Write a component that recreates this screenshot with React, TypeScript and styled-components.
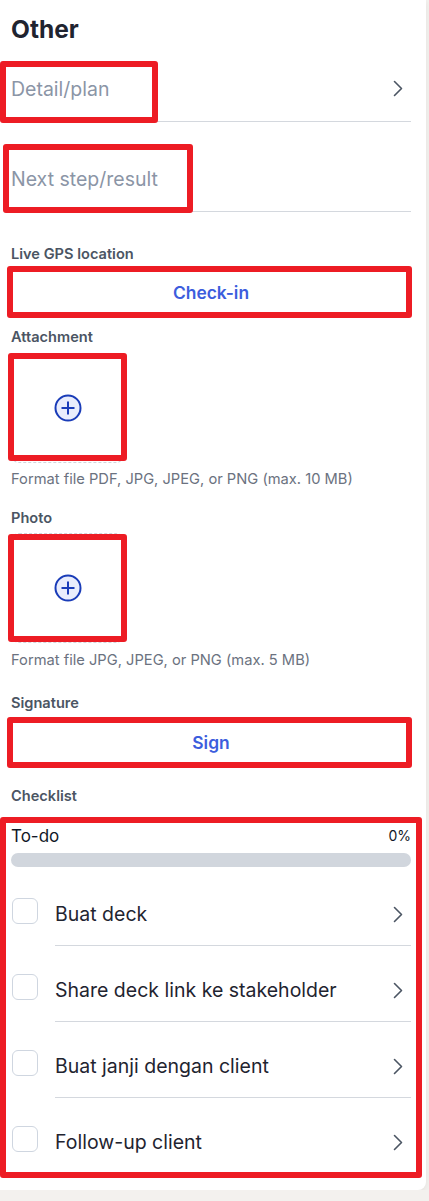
import { createGlobalStyle, styled } from "styled-components";

const GlobalStyle = createGlobalStyle`
    * { box-sizing: border-box; }
    body {
        margin: 0;
        background-color: #f3f1ee;
        font-family: Inter, "Noto Sans", "Liberation Sans", sans-serif;
    }
`;

const checklist = [
    "Buat deck",
    "Share deck link ke stakeholder",
    "Buat janji dengan client",
    "Follow-up client",
];

function Chevron() {
    return (
        <svg width="10" height="17" viewBox="0 0 10 17" fill="none">
            <polyline points="1.5,1.5 8.5,8.5 1.5,15.5" stroke="#4b5563" strokeWidth="1.6" strokeLinecap="round" strokeLinejoin="round" />
        </svg>
    );
}

function PlusCircle() {
    return (
        <svg width="28" height="28" viewBox="0 0 28 28" fill="none">
            <circle cx="14" cy="14" r="12.5" fill="#e9edfc" stroke="#1a3cb8" strokeWidth="2" />
            <line x1="7.5" y1="14" x2="20.5" y2="14" stroke="#1a3cb8" strokeWidth="2" />
            <line x1="14" y1="7.5" x2="14" y2="20.5" stroke="#1a3cb8" strokeWidth="2" />
        </svg>
    );
}

export default function App() {
    return (
        <>
            <GlobalStyle />
            <Card>
                <Heading>Other</Heading>

                <Marked $mt={18}>
                    <Field>
                        <Placeholder>Detail/plan</Placeholder>
                        <Chevron />
                    </Field>
                    <Outline $top={0} $left={-11} $width={158} $height={62} />
                </Marked>

                <Marked $mt={29}>
                    <Field>
                        <Placeholder>Next step/result</Placeholder>
                    </Field>
                    <Outline $top={-7} $left={-8} $width={190} $height={69} />
                </Marked>

                <Label $mt={32}>Live GPS location</Label>
                <Marked $mt={4}>
                    <ActionButton>Check-in</ActionButton>
                    <Outline $top={-2} $left={-4} $right={-1} $bottom={-2} />
                </Marked>

                <Label $mt={11}>Attachment</Label>
                <Marked $mt={6} $inline>
                    <UploadBox><PlusCircle /></UploadBox>
                    <Outline $top={0} $left={-3} $width={119} $height={108} />
                </Marked>
                <Helper $mt={6}>Format file PDF, JPG, JPEG, or PNG (max. 10 MB)</Helper>

                <Label $mt={19}>Photo</Label>
                <Marked $mt={5} $inline>
                    <UploadBox><PlusCircle /></UploadBox>
                    <Outline $top={1} $left={-3} $width={119} $height={108} />
                </Marked>
                <Helper $mt={7}>Format file JPG, JPEG, or PNG (max. 5 MB)</Helper>

                <Label $mt={23}>Signature</Label>
                <Marked $mt={5}>
                    <ActionButton>Sign</ActionButton>
                    <Outline $top={-1} $left={-4} $right={-1} $bottom={-2} />
                </Marked>

                <Label $mt={20}>Checklist</Label>
                <Marked $mt={20}>
                    <ProgressHead>
                        <span className="title">To-do</span>
                        <span className="percent">0%</span>
                    </ProgressHead>
                    <ProgressTrack><ProgressFill style={{ width: "0%" }} /></ProgressTrack>
                    <TaskList>
                        {checklist.map((task) => (
                            <TaskRow key={task}>
                                <Checkbox />
                                <TaskBody>
                                    <span>{task}</span>
                                    <Chevron />
                                </TaskBody>
                            </TaskRow>
                        ))}
                    </TaskList>
                    <Outline $top={-9} $left={-11} $right={-11} $bottom={-5} />
                </Marked>
            </Card>
        </>
    );
}

const Card = styled.div`
    width: 426px;
    background-color: #ffffff;
    padding: 15px 15px 17px 11px;
    border-radius: 0 0 8px 0;
    box-shadow: 0 2px 6px rgba(0, 0, 0, 0.07);
    display: flex;
    flex-direction: column;
    align-items: stretch;
`;

const Heading = styled.h2`
    margin: 0;
    font-size: 24.5px;
    line-height: 28px;
    font-weight: 700;
    color: #1f2430;
`;

const Marked = styled.div<{ $mt: number; $inline?: boolean }>`
    position: relative;
    margin-top: ${(p) => p.$mt}px;
    align-self: ${(p) => (p.$inline ? "flex-start" : "stretch")};
`;

const Outline = styled.div<{ $top: number; $left: number; $right?: number; $bottom?: number; $width?: number; $height?: number }>`
    position: absolute;
    top: ${(p) => p.$top}px;
    left: ${(p) => p.$left}px;
    ${(p) => (p.$right !== undefined ? `right: ${p.$right}px;` : "")}
    ${(p) => (p.$bottom !== undefined ? `bottom: ${p.$bottom}px;` : "")}
    ${(p) => (p.$width !== undefined ? `width: ${p.$width}px;` : "")}
    ${(p) => (p.$height !== undefined ? `height: ${p.$height}px;` : "")}
    border: 6px solid #ed1c24;
    border-radius: 3px;
    pointer-events: none;
`;

const Field = styled.div`
    height: 61px;
    padding-bottom: 5px;
    display: flex;
    align-items: center;
    justify-content: space-between;
    border-bottom: 1px solid #d4d8de;
    padding-right: 8px;
`;

const Placeholder = styled.span`
    font-size: 19.5px;
    color: #8b95a6;
`;

const Label = styled.div<{ $mt: number }>`
    margin-top: ${(p) => p.$mt}px;
    font-size: 14.6px;
    line-height: 20px;
    font-weight: 600;
    color: #4b5563;
`;

const ActionButton = styled.button`
    width: 100%;
    height: 48px;
    border: 1px solid #d1d5db;
    border-radius: 6px;
    background-color: #ffffff;
    font-family: inherit;
    font-size: 17.4px;
    font-weight: 600;
    color: #3c5ddd;
    cursor: pointer;
`;

const UploadBox = styled.div`
    width: 113px;
    height: 110px;
    border: 1.5px dashed #d1d5db;
    border-radius: 8px;
    display: flex;
    align-items: center;
    justify-content: center;
`;

const Helper = styled.div<{ $mt: number }>`
    margin-top: ${(p) => p.$mt}px;
    font-size: 14.7px;
    line-height: 20px;
    color: #6b7280;
`;

const ProgressHead = styled.div`
    display: flex;
    justify-content: space-between;
    align-items: center;
    line-height: 20px;
    color: #111827;

    .title { font-size: 17px; }
    .percent { font-size: 14px; }
`;

const ProgressTrack = styled.div`
    margin-top: 7px;
    height: 14px;
    border-radius: 7px;
    background-color: #d1d6dd;
    overflow: hidden;
`;

const ProgressFill = styled.div`
    height: 100%;
    background-color: #3c5ddd;
`;

const TaskList = styled.div`
    margin-top: 3px;
    display: flex;
    flex-direction: column;
`;

const TaskRow = styled.div`
    display: flex;
    align-items: flex-start;

    &:last-child > div:last-child {
        border-bottom: none;
    }
`;

const Checkbox = styled.span`
    flex: none;
    width: 26px;
    height: 26px;
    margin: 28px 0 0 1px;
    border: 1.5px solid #cfd6e0;
    border-radius: 6px;
    background-color: #ffffff;
`;

const TaskBody = styled.div`
    flex: 1;
    margin-left: 17px;
    padding: 30px 8px 17px 0;
    display: flex;
    align-items: center;
    justify-content: space-between;
    line-height: 28px;
    border-bottom: 1px solid #d4d8de;
    font-size: 19.5px;
    color: #1f2430;
`;
